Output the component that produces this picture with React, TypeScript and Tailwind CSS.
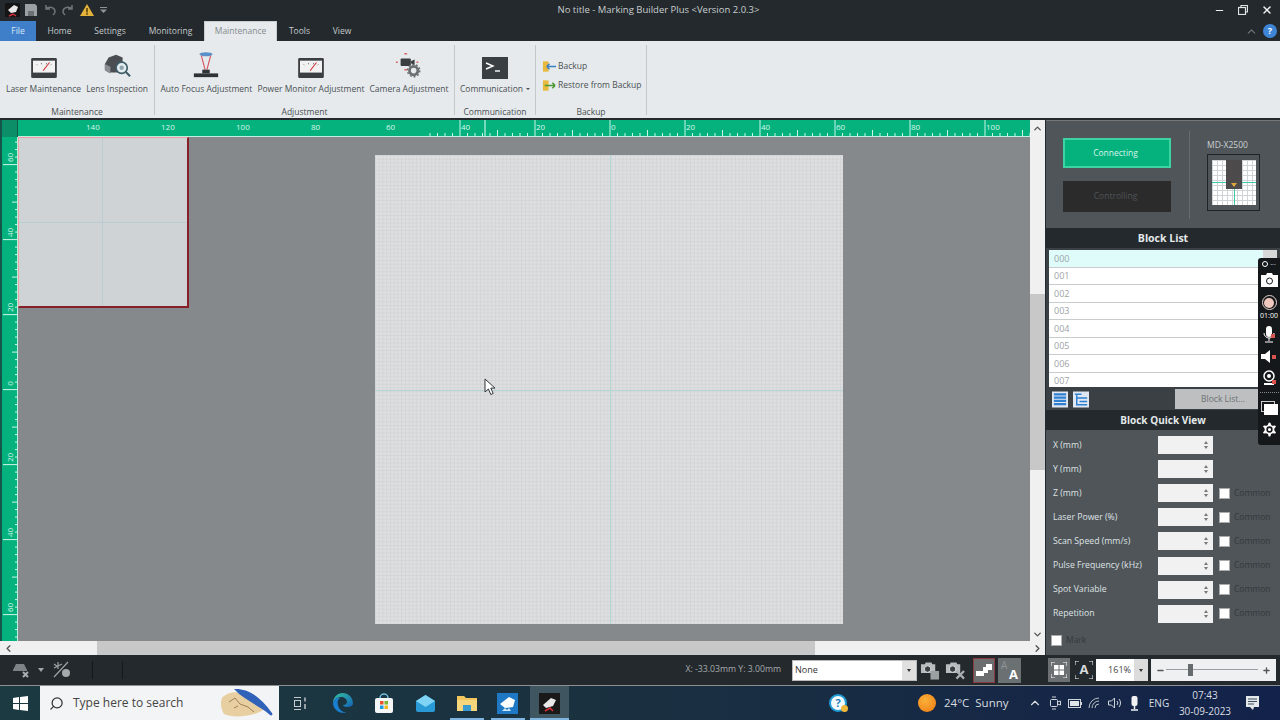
import { ChevronDown, ChevronLeft, ChevronRight, ChevronUp, Minus, Plus, Search, Settings, X } from "lucide-react";

const tabs = [
  { label: "Home", cls: "w-[47px]" },
  { label: "Settings", cls: "w-[54px]" },
  { label: "Monitoring", cls: "w-[67px]" },
  { label: "Maintenance", cls: "w-[73px]", active: true },
  { label: "Tools", cls: "w-[45px]" },
  { label: "View", cls: "w-[40px]" },
];
const blocks = ["000", "001", "002", "003", "004", "005", "006", "007"];
const fields = [
  { label: "X (mm)", common: false },
  { label: "Y (mm)", common: false },
  { label: "Z (mm)", common: true },
  { label: "Laser Power (%)", common: true },
  { label: "Scan Speed (mm/s)", common: true },
  { label: "Pulse Frequency (kHz)", common: true },
  { label: "Spot Variable", common: true },
  { label: "Repetition", common: true },
];
const hLabels = [
  { x: 85, t: "140" },
  { x: 160, t: "120" },
  { x: 235, t: "100" },
  { x: 310, t: "80" },
  { x: 385, t: "60" },
  { x: 460, t: "40" },
  { x: 535, t: "20" },
  { x: 610, t: "0" },
  { x: 685, t: "20" },
  { x: 760, t: "40" },
  { x: 835, t: "60" },
  { x: 910, t: "80" },
  { x: 985, t: "100" },
];
const vLabels = [
  { y: 157, t: "60" },
  { y: 232, t: "40" },
  { y: 307, t: "20" },
  { y: 383, t: "0" },
  { y: 457, t: "20" },
  { y: 532, t: "40" },
  { y: 607, t: "60" },
];

function Meter() {
  return (
    <svg width="28" height="22" viewBox="0 0 30 24">
      <rect x="1" y="1" width="28" height="22" rx="1.5" fill="#3b3f42" />
      <rect x="3" y="4" width="24" height="13" fill="#f2f2f2" />
      <path d="M7 8l1 1M12 6.5l.5 1.5M18 6.5l-.5 1.5M23 8l-1 1" stroke="#777" />
      <path d="M14 15l7-9" stroke="#d2313a" strokeWidth="1.2" />
    </svg>
  );
}

function LensIcon() {
  return (
    <svg width="30" height="28" viewBox="0 0 30 30">
      <path d="M2 14l4-7 8-3 7 3v5a8 8 0 0 0-5 11H6l-4-3z" fill="#4a4e52" />
      <path d="M2 14l6 3v7l-6-3z" fill="#8a8e92" />
      <circle cx="20" cy="18" r="6" fill="#e4edf0" stroke="#3d5c68" strokeWidth="1.8" />
      <circle cx="20" cy="18" r="2.4" fill="#8fa5ae" />
      <path d="M24.5 22.5L29 27" stroke="#3d5c68" strokeWidth="2.2" />
    </svg>
  );
}

function FocusIcon() {
  return (
    <svg width="28" height="28" viewBox="0 0 28 30">
      <ellipse cx="14" cy="3.5" rx="7" ry="2.2" fill="#5a90c8" />
      <path d="M9 5l4 15M19 5l-4 15" stroke="#d9505e" strokeWidth="1.2" />
      <rect x="10" y="20" width="8" height="4" fill="#2f3336" />
      <rect x="1" y="24" width="26" height="4" fill="#2f3336" />
    </svg>
  );
}

function CameraAdjustIcon() {
  return (
    <svg width="30" height="28" viewBox="0 0 30 30">
      <rect x="6" y="8" width="11" height="8" rx="1" fill="#3b3f42" />
      <path d="M17 11l4-2v6l-4-2z" fill="#3b3f42" />
      <path d="M10 3h3M1 12h2M10 20h3M23 12h2" stroke="#d46a6a" strokeWidth="1.6" />
      <circle cx="20" cy="21" r="4.5" fill="none" stroke="#6a6e72" strokeWidth="3" />
      <circle cx="20" cy="21" r="6.6" fill="none" stroke="#6a6e72" strokeWidth="1.5" strokeDasharray="2 2.1" />
    </svg>
  );
}

function TerminalIcon() {
  return (
    <svg width="26" height="22" viewBox="0 0 26 22">
      <rect width="26" height="22" fill="#3a3f43" />
      <path d="M4 6l7 3-7 3" fill="none" stroke="#fff" strokeWidth="1.4" />
      <path d="M13 14h5" stroke="#fff" strokeWidth="1.4" />
    </svg>
  );
}

function FolderArrow({ color, flip }: { color: string; flip?: boolean }) {
  return (
    <svg width="15" height="13" viewBox="0 0 16 13">
      <path d="M1 1h6v11H1z" fill="#e8b93e" />
      <path d={flip ? "M15 6.5H5M5 6.5l3-3M5 6.5l3 3" : "M3 6.5h11M14 6.5l-3-3M14 6.5l-3 3"} fill="none" stroke={color} strokeWidth="1.6" />
    </svg>
  );
}

function MiniStage() {
  return (
    <div className="w-[53px] h-[57px] border border-[#1f2326] bg-[#4f5559] flex items-center justify-center">
      <div className="relative w-[44px] h-[45px] bg-white bg-[linear-gradient(#d0d4d7_1px,transparent_1px),linear-gradient(90deg,#d0d4d7_1px,transparent_1px)] bg-[size:5px_5px]">
        <div className="absolute left-0 right-0 top-[22px] h-px bg-[#3cc9a5]" />
        <div className="absolute top-0 bottom-0 left-[22px] w-px bg-[#3cc9a5]" />
        <div className="absolute left-[14px] top-0 w-[16px] h-[29px] bg-[#4c4a4a] flex items-end justify-center pb-[2px]">
          <div className="w-0 h-0 border-l-[3px] border-r-[3px] border-t-[4px] border-l-transparent border-r-transparent border-t-[#e0a83a]" />
        </div>
      </div>
    </div>
  );
}

function Ruler() {
  const ticks = [];
  for (let i = -24; i < 140; i++) {
    const x = 610 - 18 + i * 7.5;
    const n = ((i % 10) + 10) % 10;
    const h = n === 0 ? 16 : n === 5 ? 6 : 3;
    ticks.push(<line key={i} x1={x} x2={x} y1={16} y2={16 - h} stroke="#cdf5e6" strokeWidth="1" />);
  }
  return (
    <div className="relative h-[17px] flex-1 bg-[#05b27e] border-b border-[#bff0df] overflow-hidden">
      <svg className="absolute inset-0" width="1012" height="17">
        {ticks}
        <line x1={467} x2={467} y1={0} y2={17} stroke="#e6fff6" />
      </svg>
      {hLabels.map((l) => (
        <span key={l.x} className="absolute top-[2px] text-[8px] leading-[9px] text-[#d9f7ec]" style={{ left: l.x - 18 + 1 }}>
          {l.t}
        </span>
      ))}
    </div>
  );
}

function SideRuler() {
  const ticks = [];
  for (let k = -34; k < 34; k++) {
    const y = 389.6 - 137 + k * 7.5;
    const n = ((k % 10) + 10) % 10;
    const h = n === 0 ? 15 : n === 5 ? 6 : 3;
    ticks.push(<line key={k} y1={y} y2={y} x1={16} x2={16 - h} stroke="#cdf5e6" strokeWidth="1" />);
  }
  return (
    <div className="relative w-[18px] bg-[#05b27e] border-l-2 border-l-[#14574a] border-r border-r-[#bff0df] overflow-hidden">
      <svg className="absolute inset-0" width="16" height="504">
        {ticks}
      </svg>
      {vLabels.map((l) => (
        <span
          key={l.y}
          className="absolute left-[2px] w-[10px] text-center text-[8px] leading-[9px] text-[#d9f7ec] origin-center -rotate-90"
          style={{ top: l.y - 137 - 4.5 }}
        >
          {l.t}
        </span>
      ))}
    </div>
  );
}

function Canvas() {
  return (
    <div className="relative flex-1 bg-[#85898c] overflow-hidden">
      {/* neighbour page, partly off to the left */}
      <div className="absolute left-0 top-0 w-[171px] h-[171px] bg-[#cfd3d6] border-l border-t border-[#e8a0a5] border-r-2 border-b-2 border-r-[#861f28] border-b-[#861f28]">
        <div className="absolute left-[83px] top-0 bottom-0 w-px bg-[#b9cdd0]" />
        <div className="absolute top-[84px] left-0 right-0 h-px bg-[#b9cdd0]" />
      </div>
      {/* main page */}
      <div className="absolute left-[357px] top-[18px] w-[468px] h-[469px] bg-[#dedfe1] bg-[linear-gradient(#d3d5d7_1px,transparent_1px),linear-gradient(90deg,#d3d5d7_1px,transparent_1px)] bg-[size:3.75px_3.75px]">
        <div className="absolute left-[235px] top-0 bottom-0 w-px bg-[#b4d6d2]" />
        <div className="absolute top-[235px] left-0 right-0 h-px bg-[#b4d6d2]" />
      </div>
      {/* mouse pointer */}
      <svg className="absolute left-[466px] top-[241px]" width="13" height="18" viewBox="0 0 13 18">
        <path d="M1 1v13l3.4-3 2.4 5.5 2.4-1-2.4-5.4H11z" fill="#fff" stroke="#33373a" strokeWidth="1" />
      </svg>
    </div>
  );
}

function FieldRow({ label, common }: { label: string; common: boolean }) {
  return (
    <div className="h-[24.1px] flex items-center pl-[7px]">
      <span className="w-[105px] text-[8.7px] text-[#dfe3e5] whitespace-nowrap">{label}</span>
      <div className="w-[55px] h-[18px] bg-[#f1f1f1] flex justify-end items-center pr-[5px]">
        <div className="flex flex-col gap-[2px]">
          <div className="w-0 h-0 border-l-[2.5px] border-r-[2.5px] border-b-[3px] border-l-transparent border-r-transparent border-b-[#777]" />
          <div className="w-0 h-0 border-l-[2.5px] border-r-[2.5px] border-t-[3px] border-l-transparent border-r-transparent border-t-[#777]" />
        </div>
      </div>
      {common && (
        <div className="flex items-center ml-[6px] gap-[4px]">
          <div className="w-[11px] h-[11px] bg-white border border-[#aaa]" />
          <span className="text-[8.5px] text-[#35393c]">Common</span>
        </div>
      )}
    </div>
  );
}

function RibbonButton({ icon, label, caret }: { icon: React.ReactNode; label: string; caret?: boolean }) {
  return (
    <div className="flex flex-col items-center">
      <div className="h-[28px] flex items-end justify-center">{icon}</div>
      <span className="mt-[4px] text-[8.5px] leading-[12px] text-[#4a5054] whitespace-nowrap flex items-center">
        {label}
        {caret && <span className="ml-[3px] w-0 h-0 border-l-[2px] border-r-[2px] border-t-[2px] border-l-transparent border-r-transparent border-t-[#4a5054]" />}
      </span>
    </div>
  );
}

function RibbonGroup({ title, width, children }: { title: string; width: number; children: React.ReactNode }) {
  return (
    <div className="flex flex-col items-center border-r border-[#c4c8cb] h-[70px] mt-[4px]" style={{ width }}>
      <div className="flex-1 flex justify-center gap-[5px] pt-[6px]">{children}</div>
      <span className="text-[8.5px] leading-[12px] text-[#4a5054] mb-[-3px]">{title}</span>
    </div>
  );
}

function RecorderBar() {
  return (
    <div className="absolute right-0 top-[258px] w-[22px] h-[187px] bg-[#15181a] rounded-l-[3px] flex flex-col items-center text-white">
      <div className="h-[12px] flex items-center gap-[2px] text-[7px] leading-none">
        <span className="w-[6px] h-[6px] rounded-full border border-white" />
        <span>···</span>
      </div>
      <svg className="mt-[3px]" width="17" height="14" viewBox="0 0 17 14">
        <path d="M0 2h5l1-2h5l1 2h5v12H0z" fill="#fff" />
        <circle cx="8.5" cy="8" r="3" fill="none" stroke="#15181a" />
      </svg>
      <div className="mt-[8px] w-[15px] h-[15px] rounded-full border border-[#e8d5d0] flex items-center justify-center">
        <div className="w-[10px] h-[10px] rounded-full bg-[#f0c8bd]" />
      </div>
      <span className="text-[7px] leading-[10px] mt-[1px]">01:00</span>
      <svg className="mt-[5px]" width="14" height="17" viewBox="0 0 14 17">
        <rect x="4" y="0" width="6" height="11" rx="3" fill="#fff" />
        <path d="M2 7a5 5 0 0 0 10 0M7 12v3M3 16h8" fill="none" stroke="#fff" />
        <rect x="9" y="8" width="4" height="4" fill="#d9534f" />
      </svg>
      <svg className="mt-[7px]" width="16" height="13" viewBox="0 0 16 13">
        <path d="M0 4h4l5-4v13l-5-4H0z" fill="#fff" />
        <rect x="11" y="5" width="4" height="4" fill="#d9534f" />
      </svg>
      <svg className="mt-[7px]" width="15" height="16" viewBox="0 0 15 16">
        <circle cx="7" cy="6" r="5" fill="none" stroke="#fff" strokeWidth="1.5" />
        <circle cx="7" cy="6" r="2" fill="#fff" />
        <path d="M2 14h10" stroke="#fff" strokeWidth="2" />
        <rect x="10" y="10" width="4" height="4" fill="#d9534f" />
      </svg>
      <div className="mt-[6px] w-[19px] border-t border-dotted border-[#888]" />
      <div className="relative mt-[8px] w-[17px] h-[14px]">
        <div className="absolute left-0 top-0 w-[14px] h-[11px] border border-[#ccc]" />
        <div className="absolute right-0 bottom-0 w-[14px] h-[11px] bg-white" />
      </div>
      <Settings className="mt-[5px]" size={19} fill="#fff" stroke="#15181a" strokeWidth={2} />
    </div>
  );
}

function SearchArt() {
  return (
    <svg width="56" height="30" viewBox="0 0 56 30">
      <path d="M2 10c6-7 18-7 26-3 6 3 12 6 18 12-4 5-10 7-16 8-8 2-20 2-26-1-3-5-4-11-2-16z" fill="#e7cfa2" />
      <path d="M9 14l6-4 5 6 8 3 6 5M14 20l4-2" fill="none" stroke="#8a6a45" strokeWidth="0.8" />
      <path d="M14 1c10-1 24 4 38 24 1 2 0 3-2 2C40 18 24 12 14 1z" fill="#2f62b8" />
    </svg>
  );
}

function TaskbarIcons() {
  return (
    <div className="flex items-center h-full ml-[2px]">
      <div className="w-[41px] flex justify-center">
        <svg width="24" height="24" viewBox="0 0 24 24">
          <defs>
            <linearGradient id="edge" x1="0" y1="0" x2="1" y2="1">
              <stop offset="0" stopColor="#35c1a0" />
              <stop offset="1" stopColor="#1463b8" />
            </linearGradient>
          </defs>
          <path d="M12 2a10 10 0 0 1 10 10c0 3-3 4-6 4-2 0-4-1-4-2 2 0 4-1 4-3 0-3-3-5-6-5-4 0-8 3-8 7A10 10 0 0 1 12 2z" fill="url(#edge)" />
          <path d="M2 13c0-4 4-7 7-6-3 2-3 6-1 10 2 3 5 5 8 4a10 10 0 0 1-14-8z" fill="#1a7fd0" />
        </svg>
      </div>
      <div className="w-[41px] flex justify-center">
        <svg width="20" height="21" viewBox="0 0 20 21">
          <path d="M6 5a4 4 0 0 1 8 0" fill="none" stroke="#6fc0de" strokeWidth="1.5" />
          <rect x="1" y="5" width="18" height="15" rx="2" fill="#f4f6f7" />
          <rect x="6" y="8" width="3.5" height="3.5" fill="#e8532e" />
          <rect x="10.5" y="8" width="3.5" height="3.5" fill="#7cb82f" />
          <rect x="6" y="12.5" width="3.5" height="3.5" fill="#1b9ce0" />
          <rect x="10.5" y="12.5" width="3.5" height="3.5" fill="#f6b61d" />
        </svg>
      </div>
      <div className="w-[42px] flex justify-center">
        <svg width="21" height="17" viewBox="0 0 21 17">
          <path d="M1 6l9.5-6L20 6v9a2 2 0 0 1-2 2H3a2 2 0 0 1-2-2z" fill="#2a9ad6" />
          <path d="M1 6l9.5 6L20 6l-9.5-6z" fill="#7fd4f5" />
        </svg>
      </div>
      <div className="relative w-[41px] h-full flex justify-center items-center">
        <svg width="20" height="17" viewBox="0 0 20 17">
          <path d="M0 1h7l2 2h11v13H0z" fill="#f2c65c" />
          <path d="M0 5h20v11H0z" fill="#f6d67c" />
          <rect x="6" y="10" width="8" height="6" fill="#3a9bd0" />
        </svg>
        <div className="absolute bottom-0 left-[4px] right-[3px] h-[2px] bg-[#7fb5e0]" />
      </div>
      <div className="relative w-[41px] h-full flex justify-center items-center">
        <svg width="21" height="21" viewBox="0 0 21 21">
          <rect width="21" height="21" fill="#1f78c4" />
          <path d="M3 11l9-7 6 3-2 7-8 1z" fill="#fff" />
          <path d="M5 18l3-3 2 2 2-2 2 3z" fill="#cfe6f5" />
        </svg>
        <div className="absolute bottom-0 left-[4px] right-[3px] h-[2px] bg-[#7fb5e0]" />
      </div>
      <div className="relative ml-[2px] w-[39px] h-full flex justify-center items-center bg-[#3f5560]">
        <svg width="21" height="21" viewBox="0 0 21 21">
          <rect width="21" height="21" fill="#191919" />
          <path d="M4 12l8-7 5 2-3 6-7 2z" fill="#e9e9e9" />
          <path d="M6 18l5-3 3 3" fill="none" stroke="#d9313a" strokeWidth="1.6" />
        </svg>
        <div className="absolute bottom-0 left-0 right-0 h-[2px] bg-[#7fb5e0]" />
      </div>
    </div>
  );
}

export default function App() {
  return (
    <div className="relative w-[1280px] h-[720px] overflow-hidden flex flex-col bg-[#23292c] font-['Open_Sans','Noto_Sans',sans-serif]">
      {/* title bar */}
      <div className="relative h-[20px] flex items-center pl-[5px]">
        <svg width="15" height="14" viewBox="0 0 15 14">
          <rect width="15" height="14" fill="#151515" />
          <path d="M3 7l6-5 4 2-2 5-5 1z" fill="#e8e8e8" />
          <path d="M4 13l4-2 3 2" fill="none" stroke="#d9313a" strokeWidth="1.4" />
        </svg>
        <svg className="ml-[5px]" width="12" height="12" viewBox="0 0 12 12">
          <path d="M0 0h10l2 2v10H0z" fill="#9aa0a3" />
          <rect x="3" y="7" width="6" height="5" fill="#6a7073" />
        </svg>
        <svg className="ml-[6px]" width="13" height="12" viewBox="0 0 13 12" fill="none" stroke="#6f7679" strokeWidth="1.5">
          <path d="M3 1v4h4M3 5c3-3 9-2 9 3 0 1-1 2-2 3" />
        </svg>
        <svg className="ml-[6px]" width="13" height="12" viewBox="0 0 13 12" fill="none" stroke="#6f7679" strokeWidth="1.5">
          <path d="M10 1v4H6M10 5C7 2 1 3 1 8c0 1 1 2 2 3" />
        </svg>
        <svg className="ml-[5px]" width="14" height="12" viewBox="0 0 14 12">
          <path d="M7 0l7 12H0z" fill="#e5b23b" />
          <rect x="6.2" y="4" width="1.6" height="4.5" fill="#5a4510" />
          <rect x="6.2" y="9.2" width="1.6" height="1.6" fill="#5a4510" />
        </svg>
        <svg className="ml-[6px]" width="7" height="6" viewBox="0 0 7 6">
          <path d="M0 0h7v1H0zM0 2.5h7L3.5 6z" fill="#8d9497" />
        </svg>
        <span className="absolute left-0 right-0 text-center pl-[37px] text-[9.5px] text-[#c9ced0]">No title - Marking Builder Plus &lt;Version 2.0.3&gt;</span>
        <div className="ml-auto flex items-center pr-[1px] text-[#eef0f1] relative">
          <div className="w-[24px] flex justify-center">
            <Minus size={11} strokeWidth={2.5} />
          </div>
          <div className="w-[24px] flex justify-center">
            <svg width="10" height="10" viewBox="0 0 10 10" fill="none" stroke="#e0e3e4" strokeWidth="1.2">
              <rect x="0.5" y="2.5" width="7" height="7" />
              <path d="M3 2.5V.5h6.5V7H7.5" />
            </svg>
          </div>
          <div className="w-[24px] flex justify-center">
            <X size={12} strokeWidth={3} />
          </div>
        </div>
      </div>

      {/* tab row */}
      <div className="h-[21px] flex items-end">
        <div className="w-[36px] h-[20px] bg-[#3f7fca] text-[8.5px] text-[#dbe8f6] flex items-center justify-center">File</div>
        {tabs.map((t) => (
          <div key={t.label} className={`${t.cls} h-[20px] text-[8.5px] flex items-center justify-center ${t.active ? "bg-[#e6eaec] text-[#858b8f] border-x border-t border-[#c9cdd0]" : "text-[#c5cacc]"}`}>
            {t.label}
          </div>
        ))}
        <div className="ml-auto flex items-center h-[20px] pr-[3px] gap-[5px]">
          <ChevronUp size={13} color="#71787b" />
          <div className="w-[14px] h-[14px] rounded-full bg-[#3f85d6] text-white text-[9px] font-bold flex items-center justify-center">?</div>
        </div>
      </div>

      {/* ribbon */}
      <div className="h-[77px] bg-[#e6eaec] flex items-start">
        <RibbonGroup title="Maintenance" width={155}>
          <RibbonButton icon={<Meter />} label="Laser Maintenance" />
          <RibbonButton icon={<LensIcon />} label="Lens Inspection" />
        </RibbonGroup>
        <RibbonGroup title="Adjustment" width={300}>
          <RibbonButton icon={<FocusIcon />} label="Auto Focus Adjustment" />
          <RibbonButton icon={<Meter />} label="Power Monitor Adjustment" />
          <RibbonButton icon={<CameraAdjustIcon />} label="Camera Adjustment" />
        </RibbonGroup>
        <RibbonGroup title="Communication" width={81}>
          <RibbonButton icon={<TerminalIcon />} label="Communication" caret />
        </RibbonGroup>
        <div className="flex flex-col items-center border-r border-[#c4c8cb] h-[70px] mt-[4px] w-[111px]">
          <div className="flex-1 flex flex-col gap-[5px] pt-[14px] w-full pl-[6px]">
            <div className="flex items-center gap-[1px] text-[8.5px] leading-[14px] text-[#4a5054] whitespace-nowrap">
              <FolderArrow color="#3b7fc4" flip />
              Backup
            </div>
            <div className="flex items-center gap-[1px] text-[8.5px] leading-[14px] text-[#4a5054] whitespace-nowrap">
              <FolderArrow color="#4a9a35" />
              Restore from Backup
            </div>
          </div>
          <span className="text-[8.5px] leading-[12px] text-[#4a5054] mb-[-3px]">Backup</span>
        </div>
      </div>

      {/* workspace */}
      <div className="h-[535px] flex mt-[2px]">
        <div className="w-[1046px] flex flex-col bg-[#23292c]">
          <div className="h-[17px] flex">
            <div className="w-[18px] bg-[#0c8e69] border-l-2 border-l-[#14574a] border-r border-r-[#145a48]" />
            <Ruler />
            <div className="w-[15px] h-[17px] bg-[#f0f0f0] flex items-center justify-center">
              <ChevronUp size={11} color="#555" strokeWidth={3} />
            </div>
            <div className="w-[1px] bg-[#23292c]" />
          </div>
          <div className="h-[504px] flex">
            <SideRuler />
            <Canvas />
            {/* vertical scrollbar */}
            <div className="w-[15px] bg-[#f0f0f0] flex flex-col">
              <div className="h-[157px]" />
              <div className="h-[176px] bg-[#c8c8c8]" />
              <div className="flex-1 flex items-end justify-center pb-[1px]">
                <ChevronDown size={11} color="#555" strokeWidth={3} />
              </div>
            </div>
            <div className="w-[1px] bg-[#23292c]" />
          </div>
          <div className="h-[14px] flex">
            <div className="w-[97px] bg-[#f0f0f0] flex items-center pl-[3px]">
              <ChevronLeft size={11} color="#555" strokeWidth={3} />
            </div>
            <div className="w-[718px] bg-[#c8c8c8]" />
            <div className="w-[230px] bg-[#f0f0f0] flex items-center justify-end pr-[2px]">
              <ChevronRight size={11} color="#555" strokeWidth={3} />
            </div>
            <div className="w-[1px]" />
          </div>
        </div>

        {/* right panel */}
        <div className="w-[234px] flex flex-col bg-[#4f5559]">
          <div className="h-[108px] flex items-center pl-[17px] border-t border-[#777]">
            <div className="flex flex-col gap-[13px] w-[108px]">
              <div className="h-[30px] bg-[#05b27e] border-2 border-[#3ed3a3] pr-[3px] pt-[2px] text-[8.5px] text-[#d6f5ea] flex items-center justify-center">Connecting</div>
              <div className="h-[31px] bg-[#2b2b2b] pr-[3px] text-[8.5px] text-[#4e5356] flex items-center justify-center">Controlling</div>
            </div>
            <div className="ml-[18px] h-[88px] border-l border-[#666b6f] pl-[17px] flex flex-col">
              <span className="text-[8.5px] leading-[12px] text-[#ccd1d3] mt-[8px]">MD-X2500</span>
              <div className="mt-[3px]">
                <MiniStage />
              </div>
            </div>
          </div>

          <div className="h-[20px] pt-[1px] bg-[#23292c] text-[10.5px] font-bold text-[#e4e8ea] flex items-center justify-center">Block List</div>
          <div className="h-[163px] bg-[#3a4043] px-[3px] pt-[2px] flex flex-col">
            <div className="relative h-[137px] shrink-0 overflow-hidden bg-white">
              {blocks.map((b, i) => (
                <div key={b} className={`h-[17.5px] pl-[5px] flex items-center text-[9px] text-[#9da3a6] border-b border-[#c9cccd] ${i === 0 ? "bg-[#dffcfa]" : "bg-white"}`}>
                  {b}
                </div>
              ))}
              <div className="absolute right-0 top-0 w-[14px] h-[9px] bg-[#d8d8d8]" />
            </div>
            <div className="flex items-center h-[24px] pl-[3px] gap-[5px]">
              <svg width="16" height="17" viewBox="0 0 17 17">
                <rect width="17" height="17" fill="#dfe8f2" />
                <path d="M2 3h13M2 6.5h13M2 10h13M2 13.5h13" stroke="#2f7fd0" strokeWidth="2.4" />
              </svg>
              <svg width="16" height="17" viewBox="0 0 17 17">
                <rect width="17" height="17" fill="#dfe8f2" />
                <path d="M2 3h7M7 7h8M7 10.5h8M7 14h8M4 4v10h3M4 7h3" stroke="#2f7fd0" strokeWidth="1.6" fill="none" />
              </svg>
              <div className="ml-auto mr-[6px] w-[96px] h-[20px] bg-[#bdbfc0] text-[8.5px] text-[#6d7174] flex items-center justify-center">Block List...</div>
            </div>
          </div>
          <div className="h-[20px] bg-[#23292c] text-[10px] font-bold text-[#e4e8ea] flex items-center justify-center -mt-[1px]">Block Quick View</div>
          <div className="flex-1 pt-[3px] flex flex-col">
            {fields.map((f) => (
              <FieldRow key={f.label} label={f.label} common={f.common} />
            ))}
            <div className="flex items-center pl-[5px] mt-[8px] gap-[4px]">
              <div className="w-[11px] h-[11px] bg-white border border-[#aaa]" />
              <span className="text-[8.5px] text-[#35393c]">Mark</span>
            </div>
          </div>
        </div>
      </div>

      {/* status bar */}
      <div className="h-[31px] flex items-center border-b border-[#8b9093]">
        <div className="w-[1046px] flex items-center relative h-full">
          <svg className="ml-[12px]" width="20" height="16" viewBox="0 0 20 16">
            <path d="M1 8l3-6h8l3 6v1H1z" fill="#7d8386" />
            <path d="M11 10l5 5M16 10l-5 5" stroke="#a9aeb0" strokeWidth="2" />
          </svg>
          <svg className="ml-[6px]" width="6" height="4" viewBox="0 0 6 4">
            <path d="M0 0h6L3 4z" fill="#a0a5a8" />
          </svg>
          <svg className="ml-[8px]" width="20" height="18" viewBox="0 0 20 18" stroke="#9ea3a6" strokeWidth="1.2" fill="none">
            <path d="M2 3l4 3M6 1v7M10 3L2 7M2 16L16 1" />
            <circle cx="14" cy="12" r="4" fill="#a5aaad" stroke="none" />
          </svg>
          <div className="ml-[20px] w-px h-[18px] bg-[#14181a]" />
          <div className="ml-[29px] w-px h-[18px] bg-[#14181a]" />
          <span className="ml-auto text-[8.7px] text-[#a6abae] whitespace-nowrap">X: -33.03mm Y: 3.00mm</span>
          <div className="ml-[11px] w-[125px] h-[21px] bg-white border border-[#bbb] flex items-center pl-[2px] text-[9px] text-[#333]">
            None
            <div className="ml-auto w-[14px] h-full bg-[#e0e0e0] flex items-center justify-center">
              <div className="w-0 h-0 border-l-[2.5px] border-r-[2.5px] border-t-[3px] border-l-transparent border-r-transparent border-t-[#333]" />
            </div>
          </div>
          <svg className="ml-[3px]" width="20" height="19" viewBox="0 0 21 19">
            <path d="M1 3h4l1-2h6l1 2h3v9H1z" fill="#b8bcbe" />
            <circle cx="8" cy="8" r="3.4" fill="#3a3f42" stroke="#e0e2e3" />
            <rect x="11" y="10" width="9" height="9" fill="#9ba0a3" />
          </svg>
          <svg className="ml-[5px]" width="20" height="19" viewBox="0 0 21 19">
            <path d="M1 3h4l1-2h6l1 2h3v9H1z" fill="#b8bcbe" />
            <circle cx="8" cy="8" r="3.4" fill="#3a3f42" stroke="#e0e2e3" />
            <path d="M12 10l8 8M20 10l-8 8" stroke="#a9aeb0" strokeWidth="2.4" />
          </svg>
          <div className="ml-[8px] w-[22px] h-[25px] bg-[#6c6d6e] border border-[#8a3a3f] flex items-center justify-center">
            <svg width="16" height="12" viewBox="0 0 16 12">
              <path d="M0 7h7V3h3V0h6v6h-4v3H8v3H0z" fill="#fff" />
            </svg>
          </div>
          <div className="relative ml-[3px] mr-[25px] w-[23px] h-[25px] bg-[#6b7073] flex items-center justify-center">
            <span className="absolute left-[3px] top-[1px] text-[10px] leading-[12px] text-[#8f9497]">A</span>
            <span className="absolute right-[3px] bottom-[1px] text-[13px] leading-[15px] font-bold text-white">A</span>
          </div>
        </div>
        <div className="flex-1 flex items-center">
          <div className="ml-[2px] w-[22px] h-[24px] bg-[#6c7073] flex items-center justify-center">
            <svg width="16" height="16" viewBox="0 0 16 16">
              <path d="M0 4V0h4M12 0h4v4M16 12v4h-4M4 16H0v-4" fill="none" stroke="#fff" />
              <rect x="3" y="3" width="4.5" height="4.5" fill="#fff" />
              <rect x="8.5" y="3" width="4.5" height="4.5" fill="#fff" />
              <rect x="3" y="8.5" width="4.5" height="4.5" fill="#fff" />
              <rect x="8.5" y="8.5" width="4.5" height="4.5" fill="#fff" />
            </svg>
          </div>
          <div className="relative ml-[3px] w-[22px] h-[24px] flex items-center justify-center text-[#d8dadb] text-[13px] font-bold">
            A
            <svg className="absolute left-[2px] top-[3px]" width="18" height="18" viewBox="0 0 18 18">
              <path d="M0 4V0h4M14 0h4v4M18 14v4h-4M4 18H0v-4" fill="none" stroke="#fff" />
            </svg>
          </div>
          <div className="ml-[1px] w-[38px] h-[22px] bg-white text-[9px] text-[#444] flex items-center justify-end pr-[3px]">161%</div>
          <div className="w-[14px] h-[22px] bg-[#dcdcdc] flex items-center justify-center">
            <div className="w-0 h-0 border-l-[2.5px] border-r-[2.5px] border-t-[3px] border-l-transparent border-r-transparent border-t-[#333]" />
          </div>
          <div className="relative ml-[3px] w-[125px] h-[22px] bg-[#eef0f1] flex items-center justify-between px-[5px]">
            <Minus size={9} color="#555" strokeWidth={3.5} />
            <div className="absolute left-[15px] right-[18px] top-[10px] h-px bg-[#9a9ea0]" />
            <div className="absolute left-[37px] top-[5px] w-[5px] h-[12px] bg-[#666b6e]" />
            <Plus size={9} color="#555" strokeWidth={3.5} />
          </div>
        </div>
      </div>

      {/* windows taskbar */}
      <div className="flex-1 flex items-center bg-[linear-gradient(90deg,#1c3a42,#1a3040_50%,#13224a)]">
        <div className="w-[40px] flex justify-center">
          <svg width="15" height="15" viewBox="0 0 15 15">
            <path d="M0 2l6-1v6H0zM7 1l8-1v7H7zM0 8h6v6l-6-1zM7 8h8v7l-8-1z" fill="#fff" />
          </svg>
        </div>
        <div className="w-[239px] h-full bg-[#f3f4f5] flex items-center pl-[9px]">
          <Search size={15} color="#333" className="-scale-x-100" />
          <span className="ml-[9px] text-[12px] text-[#444]">Type here to search</span>
          <div className="ml-auto mr-[3px]">
            <SearchArt />
          </div>
        </div>
        <div className="w-[41px] flex justify-center">
          <svg width="14" height="13" viewBox="0 0 14 13" fill="none" stroke="#c6cdd1">
            <path d="M1 .5h7M1 12.5h7" />
            <rect x="1.5" y="3.5" width="6" height="6" />
            <path d="M12 .5v4M12 7v5" strokeWidth="1.4" />
          </svg>
        </div>
        <TaskbarIcons />
        <div className="ml-[259px] w-[20px] flex justify-center">
          <div className="relative w-[18px] h-[18px] rounded-full bg-[#f4fafe] border-2 border-[#1f9bd6] text-[#1f7fb8] text-[11px] font-bold flex items-center justify-center">
            ?
            <div className="absolute -right-[3px] -bottom-[2px] w-[7px] h-[7px] rounded-full bg-[#f0b93a]" />
          </div>
        </div>
        <div className="ml-[70px] w-[18px] h-[18px] rounded-full bg-[radial-gradient(circle_at_40%_35%,#fbb03a,#ee7a12)]" />
        <span className="ml-[8px] text-[11.5px] text-[#d8dde0] whitespace-nowrap">24°C&nbsp; Sunny</span>

        <div className="ml-auto flex items-center pr-[8px]">
          <div className="w-[20px] flex justify-center">
            <ChevronUp size={14} color="#d8dde0" />
          </div>
          <div className="w-[20px] flex justify-center">
            <svg width="13" height="14" viewBox="0 0 13 14" fill="none" stroke="#cfd5d8">
              <rect x="1.5" y="3.5" width="7" height="7" rx="1" />
              <path d="M8.5 6l3-1v4l-3-1M3 1h4M3 13h4" />
            </svg>
          </div>
          <div className="w-[20px] flex justify-center">
            <svg width="14" height="9" viewBox="0 0 14 9">
              <rect x="0.5" y="0.5" width="12" height="8" fill="none" stroke="#cfd5d8" />
              <rect x="2" y="2" width="9" height="5" fill="#e0e5e8" />
              <rect x="13" y="3" width="1" height="3" fill="#cfd5d8" />
            </svg>
          </div>
          <div className="w-[20px] flex justify-center">
            <svg width="14" height="12" viewBox="0 0 14 12" fill="none" stroke="#b8bfc3">
              <path d="M1 11a10 10 0 0 1 10-10M4 11a7 7 0 0 1 7-7M7 11a4 4 0 0 1 4-4" />
            </svg>
          </div>
          <div className="w-[20px] flex justify-center">
            <svg width="15" height="12" viewBox="0 0 15 12" fill="none" stroke="#cfd5d8">
              <path d="M.5 4h3l3-3v10l-3-3h-3zM9 4a3 3 0 0 1 0 4M11 2a6 6 0 0 1 0 8" />
            </svg>
          </div>
          <div className="w-[19px] flex justify-center">
            <svg width="11" height="15" viewBox="0 0 11 15">
              <rect x="2.5" y="0" width="6" height="10" rx="2" fill="#f0f2f3" />
              <path d="M5.5 10v3M2 14h7" stroke="#f0f2f3" strokeWidth="1.5" />
            </svg>
          </div>
          <div className="w-[30px] flex justify-center text-[10px] text-[#d8dde0]">ENG</div>
          <div className="ml-[2px] w-[58px] flex flex-col items-center text-[10px] leading-[16px] text-[#d8dde0]">
            <span>07:43</span>
            <span className="whitespace-nowrap">30-09-2023</span>
          </div>
          <div className="w-[38px] flex justify-center">
            <svg width="14" height="14" viewBox="0 0 14 14">
              <path d="M0 0h13v11H8l-1 3-3-3H0z" fill="#e4e8ea" />
              <path d="M2 3h9M2 5.5h9M2 8h6" stroke="#3c4d5a" />
            </svg>
          </div>
        </div>
      </div>

      <RecorderBar />
    </div>
  );
}
